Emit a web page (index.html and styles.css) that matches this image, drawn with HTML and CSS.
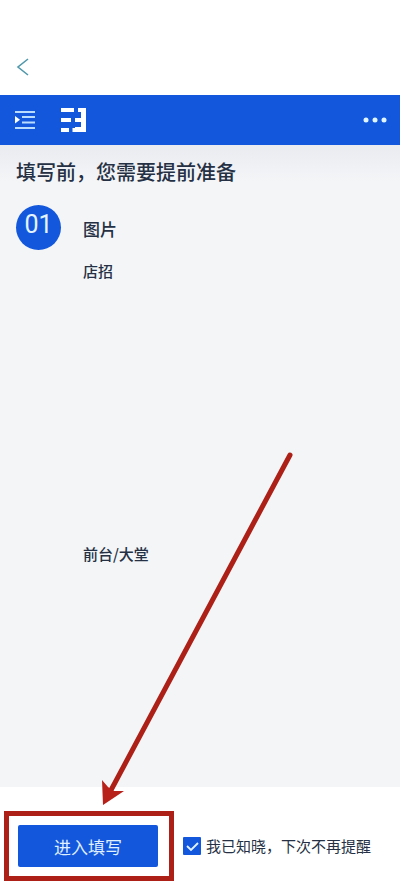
FILE: index.html
```
<!DOCTYPE html>
<html lang="zh-CN">
  <head>
    <meta charset="utf-8">
    <meta name="viewport" content="width=device-width, initial-scale=1">
    <title>填写前准备</title>
    <link rel="stylesheet" href="styles.css">
  </head>

  <body>

    <div class="top">
      <button type="button" class="icon-btn" aria-label="返回">
        <svg width="14" height="20" viewBox="0 0 14 20"><path d="M12 2 L2 10 L12 18" fill="none" stroke="#4f98ab" stroke-width="1.6"/></svg>
      </button>
    </div>

    <header class="bar">
      <button type="button" class="icon-btn" aria-label="菜单">
        <svg width="22" height="20" viewBox="0 0 22 20" fill="#b9dcff">
          <path d="M1 1h20v2H1zM8 6h13v2H8zM8 11.500h13v2H8zM1 17h20v2H1z"/>
          <path d="M1 6v7.500l5-3.700z" fill="#fff"/>
        </svg>
      </button>
      <svg class="logo" width="26" height="26" viewBox="0 0 26 26" fill="#fff">
        <path d="M1 1h13v4H1zM1 11h10v4H1zM1 21h8v4H1z"/>
        <path d="M18 1h8v24H12.500v-4H15v-1h6v-5h-6v-4h6V5h-3z"/>
      </svg>
      <button type="button" class="icon-btn more" aria-label="更多">
        <svg width="24" height="6" viewBox="0 0 24 6" fill="#e2f6ff"><circle cx="3" cy="3" r="2.500"/><circle cx="12" cy="3" r="2.500"/><circle cx="21" cy="3" r="2.500"/></svg>
      </button>
    </header>

    <main class="content">
      <h1>填写前，您需要提前准备</h1>
      <section class="step">
        <span class="num">01</span>
        <div class="detail">
          <h2>图片</h2>
          <p class="item photo">店招</p>
          <p class="item">前台/大堂</p>
        </div>
      </section>
    </main>

    <footer class="footer">
      <div class="marked">
        <button type="button" class="submit">进入填写</button>
        <svg class="arrow" width="200" height="360" viewBox="0 0 200 360">
          <path d="M191 5 L11 342" fill="none" stroke="#ad2017" stroke-width="5" stroke-linecap="round"/>
          <path d="M4 355 L3 330 L9 337 L15 341 L25 341 Z" fill="#b82119"/>
        </svg>
      </div>
      <label class="agree"><input type="checkbox" checked>我已知晓，下次不再提醒</label>
    </footer>

  </body>
</html>
```

FILE: styles.css
```
* {
  box-sizing: border-box;
}

body {
  margin: 0;
  min-height: 100vh;
  display: flex;
  flex-direction: column;
  background: #fff;
  color: #253044;
  font-family: "Noto Sans CJK SC", "Noto Sans", sans-serif;
}

h1, h2, p {
  margin: 0;
}

.icon-btn {
  display: flex;
  padding: 0;
  border: 0;
  background: none;
}

/* white strip with the back arrow */
.top {
  height: 95px;
  padding: 57px 16px 0;
}

.bar {
  display: flex;
  align-items: center;
  height: 50px;
  padding: 0 13px 0 14px;
  background: #1358dc;
}

.logo {
  margin-left: 24px;
}

.more {
  margin-left: auto;
}

.content {
  flex: 1;
  padding: 12px 16px;
  background: linear-gradient(#e9ebf0, #f3f5f7 36px);
}

h1 {
  font-size: 20px;
  line-height: 30px;
  font-weight: 500;
}

.step {
  display: flex;
  gap: 22px;
  margin-top: 18px;
}

.num {
  width: 45px;
  height: 45px;
  border-radius: 50%;
  background: #1358dc;
  color: #e4f4ff;
  font-family: Roboto, sans-serif;
  font-size: 25px;
  line-height: 40px;
  text-align: center;
}

h2 {
  margin-top: 12px;
  font-size: 17px;
  line-height: 24px;
  font-weight: 500;
}

.item {
  margin-top: 18px;
  font-size: 15px;
  line-height: 24px;
  font-weight: 500;
}

.photo {
  min-height: 265px;
}

.footer {
  display: flex;
  align-items: center;
  gap: 9px;
  padding: 24px 4px 8px;
}

/* red frame around the button */
.marked {
  position: relative;
  border: 5px solid #ad2017;
  padding: 9px 11px 9px 9px;
}

.submit {
  display: block;
  width: 140px;
  height: 42px;
  border: 0;
  border-radius: 2px;
  background: #1358dc;
  color: #e0f0ff;
  font-family: inherit;
  font-size: 17px;
}

.arrow {
  position: absolute;
  left: 90px;
  bottom: 66px;
  pointer-events: none;
}

.agree {
  display: flex;
  align-items: center;
  gap: 5px;
  font-size: 15px;
  line-height: 24px;
  white-space: nowrap;
}

.agree input {
  appearance: none;
  width: 18px;
  height: 18px;
  margin: 0;
  border-radius: 1px;
}

.agree input:checked {
  background: #1358dc url("data:image/svg+xml,%3Csvg xmlns='http://www.w3.org/2000/svg' viewBox='0 0 18 18'%3E%3Cpath d='M4 9l4 4 7-7' fill='none' stroke='%23e4f4ff' stroke-width='1.8'/%3E%3C/svg%3E");
}

.agree input:not(:checked) {
  border: 1px solid #8a93a3;
}
```
